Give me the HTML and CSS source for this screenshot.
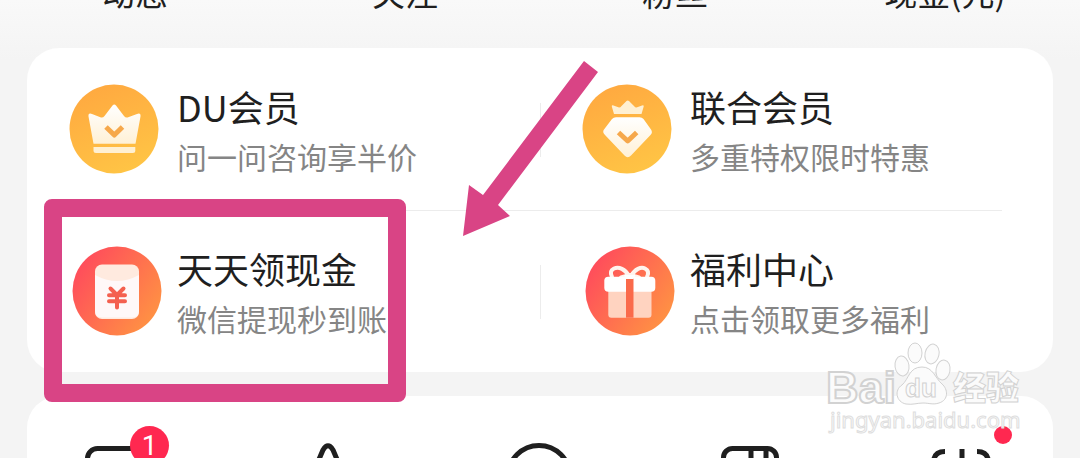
FILE: index.html
```html
<!DOCTYPE html>
<html lang="zh-CN">
<head>
<meta charset="utf-8">
<meta name="viewport" content="width=device-width, initial-scale=1">
<title>会员中心</title>
<link rel="stylesheet" href="styles.css">
</head>
<body>
<nav class="stats">
  <a class="stat" href="#">动态</a>
  <a class="stat" href="#">关注</a>
  <a class="stat" href="#">粉丝</a>
  <a class="stat" href="#">现金(元)</a>
</nav>

<main>
  <section class="card benefits">
    <a class="benefit" href="#">
      <svg class="benefit-icon" viewBox="0 0 92 88" aria-hidden="true">
        <defs>
          <linearGradient id="gold" x1="0.3" y1="0" x2="0.7" y2="1"><stop offset="0" stop-color="#ffa940"/><stop offset="1" stop-color="#ffc545"/></linearGradient>
          <linearGradient id="cream" x1="0" y1="0" x2="0" y2="1"><stop offset="0" stop-color="#fff"/><stop offset="1" stop-color="#fff1d6"/></linearGradient>
          <linearGradient id="red" x1="0.05" y1="0.2" x2="0.9" y2="0.8"><stop offset="0" stop-color="#ff4b5c"/><stop offset="1" stop-color="#ff9044"/></linearGradient>
        </defs>
        <circle cx="44" cy="44" r="44.5" fill="url(#gold)"/>
        <path d="M23.5 58.7L18.5 31.5Q18 27.500 22 29L31 32.500Q33 33 34.500 31L42.500 20.500Q44.300 18.500 46 20.500L54 31Q55.500 33 57.500 32.500L67 29Q71 27.500 70.500 31.500L65.500 58.700Z" fill="url(#cream)"/>
        <path d="M23.500 62H65.300V65.500Q65.300 68 62.800 68H26Q23.500 68 23.500 65.500Z" fill="#fff0d2"/>
        <path d="M36 42L44.300 50L52.500 42" fill="none" stroke="#f6a84b" stroke-width="5" stroke-linejoin="round"/>
      </svg>
      <span class="benefit-text"><strong>DU会员</strong><small>问一问咨询享半价</small></span>
    </a>
    <a class="benefit" href="#">
      <svg class="benefit-icon" viewBox="0 0 92 88" aria-hidden="true">
        <circle cx="44" cy="44" r="44.5" fill="url(#gold)"/>
        <path d="M31 29L28.800 21.500Q28.700 19.500 30.500 20.500L36 22.500Q37.500 22.500 38.500 21L43.500 16Q44.700 15 46 16L51 21Q52 22.500 53.500 22.500L59 20.500Q60.800 19.500 60.700 21.500L58.500 29Z" fill="#fff0d2"/>
        <path d="M33 32.300H56.500Q59 32.300 60.500 34L68 44.500Q70 47.500 67.500 50L48 70.500Q44.700 74 41.500 70.500L22 50Q19 47 21 44.500L29 34Q30.500 32.300 33 32.300Z" fill="url(#cream)"/>
        <path d="M35.500 47.500L44.700 56L53.700 47.500" fill="none" stroke="#f6a84b" stroke-width="5" stroke-linejoin="round"/>
      </svg>
      <span class="benefit-text"><strong>联合会员</strong><small>多重特权限时特惠</small></span>
    </a>
    <a class="benefit" href="#">
      <svg class="benefit-icon" viewBox="0 0 92 88" aria-hidden="true">
        <circle cx="47" cy="44" r="44.5" fill="url(#red)"/>
        <rect x="25" y="17.500" width="44" height="54.500" rx="7" fill="#ffeadf"/>
        <path d="M25 28Q47 40 69 28V63.500Q69 70.500 62 70.500H32Q25 70.500 25 63.500Z" fill="#fff8f8"/>
        <path d="M40.500 41.500L47 48L53.500 41.500M47 48V60.500M39 48.300H55M39 54.300H55" fill="none" stroke="#f4604f" stroke-width="4" stroke-linecap="round" stroke-linejoin="round"/>
      </svg>
      <span class="benefit-text"><strong>天天领现金</strong><small>微信提现秒到账</small></span>
    </a>
    <a class="benefit" href="#">
      <svg class="benefit-icon" viewBox="0 0 92 88" aria-hidden="true">
        <circle cx="47" cy="44" r="44.5" fill="url(#red)"/>
        <path d="M46 29C42 22 36 19.500 31 21.500C27 23.500 27.500 27 29 30M48 29C52 22 58 19.500 62 21.500C66 23.500 65.500 27 64 30M47 28L38 30.500M47 28L56 30.500" fill="none" stroke="#fff4ee" stroke-width="4" stroke-linecap="round"/>
        <path d="M25.300 44H68.500V67.500Q68.500 70.700 65.500 70.700H28.300Q25.300 70.700 25.300 67.500Z" fill="#ffd3c0"/>
        <rect x="21.300" y="29.700" width="51" height="15" rx="4" fill="#fff"/>
        <path d="M43 29.700H50.500V70.700H43Z" fill="#fa6a4b"/>
        <path d="M41 28H52.500L50.500 32H43Z" fill="#fff"/>
      </svg>
      <span class="benefit-text"><strong>福利中心</strong><small>点击领取更多福利</small></span>
    </a>
  </section>

  <section class="card tools">
    <button class="tool" type="button" aria-label="消息">
      <svg viewBox="0 0 70 70"><rect x="6.500" y="18.500" width="57" height="46" rx="10"/></svg>
      <span class="badge">1</span>
    </button>
    <button class="tool" type="button" aria-label="创作">
      <svg viewBox="0 0 70 70"><path d="M12 62L30 20Q35 11.500 40 20L58 62Z"/></svg>
    </button>
    <button class="tool" type="button" aria-label="客服">
      <svg viewBox="0 0 70 70"><circle cx="35" cy="46.500" r="31"/></svg>
    </button>
    <button class="tool" type="button" aria-label="书架">
      <svg viewBox="0 0 70 70"><rect x="7.500" y="18.500" width="53" height="46" rx="9"/><path d="M35 18V64M50 18V64"/></svg>
    </button>
    <button class="tool" type="button" aria-label="更多">
      <svg viewBox="0 0 70 70"><path d="M18 21.500Q6.500 21.500 6.500 33V54M35 19V54M50 21.500Q61.500 21.500 61.500 33V54"/></svg>
      <span class="dot"></span>
    </button>
  </section>
</main>

<svg class="watermark" viewBox="0 0 200 98" aria-hidden="true">
  <g class="wm-shape">
    <ellipse cx="77" cy="31" rx="7" ry="10" transform="rotate(-8 77 31)"/>
    <ellipse cx="90" cy="18" rx="7" ry="10"/>
    <ellipse cx="107" cy="19" rx="7" ry="10" transform="rotate(12 107 19)"/>
    <ellipse cx="118" cy="35" rx="7" ry="10" transform="rotate(10 118 35)"/>
    <path d="M97 32C84 32 84 44 77 50C69 55 71 67 81 69C88 70 92 68 98 68C104 68 108 70 114 68C124 65 123 54 117 49C110 43 108 32 97 32Z"/>
  </g>
  <text class="wm-brand" x="1" y="68">Bai</text>
  <text class="wm-du" x="80" y="62">du</text>
  <text class="wm-cn" x="128" y="65">经验</text>
  <text class="wm-url" x="5" y="93">jingyan.baidu.com</text>
</svg>
<div class="highlight" aria-hidden="true"></div>
<svg class="arrow" viewBox="0 0 135 175" aria-hidden="true"><path d="M121 0L135 11L35 144L47 155L0 175L6 124L20 134Z"/></svg>
</body>
</html>
```
FILE: styles.css
```css
* {
  box-sizing: border-box;
}

body {
  position: relative;
  margin: 0;
  height: 100vh;
  overflow: hidden;
  background: #f4f4f4 linear-gradient(#f9f9f9, #f4f4f4 60px) no-repeat;
  color: #1f1f1f;
  font-family: "Noto Sans CJK SC", sans-serif;
}

a {
  color: inherit;
  text-decoration: none;
}

.stats {
  display: grid;
  grid-template-columns: repeat(4, 1fr);
  margin: -32px 0 32px;
  text-align: center;
  font-size: 33px;
  line-height: 48px;
}

main {
  display: flex;
  flex-direction: column;
  gap: 24px;
  padding: 0 27px;
}

.card {
  border-radius: 32px;
  background: #fff;
}

.benefits {
  display: grid;
  grid-template-columns: 1fr 1fr;
  background:
    linear-gradient(#ececec, #ececec) 50% 55px / 1px 54px no-repeat,
    linear-gradient(#ececec, #ececec) 50% 217px / 1px 54px no-repeat,
    linear-gradient(#ececec, #ececec) center / calc(100% - 102px) 1px no-repeat,
    #fff;
}

.benefit {
  display: flex;
  align-items: center;
  gap: 15px;
  height: 162px;
  padding-left: 43px;
}

.benefit-icon {
  flex: none;
  width: 92px;
  height: 88px;
  overflow: visible;
}

.benefit-text {
  display: grid;
  padding-top: 4px;
  line-height: 50px;
  white-space: nowrap;
}

.benefit-text strong {
  font-size: 36px;
  font-weight: 400;
}

.benefit-text small {
  color: #858585;
  font-size: 30px;
}

.tools {
  display: flex;
  justify-content: space-between;
  padding: 34px 56px 34px 54px;
}

.tool {
  position: relative;
  width: 70px;
  height: 70px;
  padding: 0;
  border: 0;
  background: none;
  font: inherit;
}

.tool svg {
  display: block;
  fill: none;
  stroke: #1f1f1f;
  stroke-width: 5;
}

.badge {
  position: absolute;
  top: -4px;
  left: 49px;
  width: 39px;
  height: 39px;
  border-radius: 50%;
  background: #ff2850;
  color: #fff;
  font-family: Roboto, sans-serif;
  font-size: 28px;
  line-height: 40px;
}

.dot {
  position: absolute;
  top: -4px;
  right: -15px;
  width: 18px;
  height: 18px;
  border-radius: 50%;
  background: #ff2850;
}

.highlight {
  position: absolute;
  top: 199px;
  left: 44px;
  width: 362px;
  height: 203px;
  border: 18px solid #d94485;
  border-radius: 8px;
}

.arrow {
  position: absolute;
  top: 61px;
  left: 463px;
  width: 135px;
  height: 175px;
  fill: #d94485;
}

.watermark {
  position: absolute;
  top: 335px;
  left: 825px;
  width: 200px;
  height: 98px;
  overflow: visible;
  fill: #fbfbfb;
  stroke: #d2d2d2;
  stroke-width: 1;
}

.wm-brand {
  font: bold 45px "Liberation Sans", sans-serif;
  stroke-width: 2;
}

.wm-du {
  font: bold 26px "Liberation Sans", sans-serif;
}

.wm-cn {
  font: 900 33px "Noto Sans CJK SC", sans-serif;
}

.wm-url {
  font: 22px "Noto Sans", sans-serif;
  stroke: #dedede;
}
```
